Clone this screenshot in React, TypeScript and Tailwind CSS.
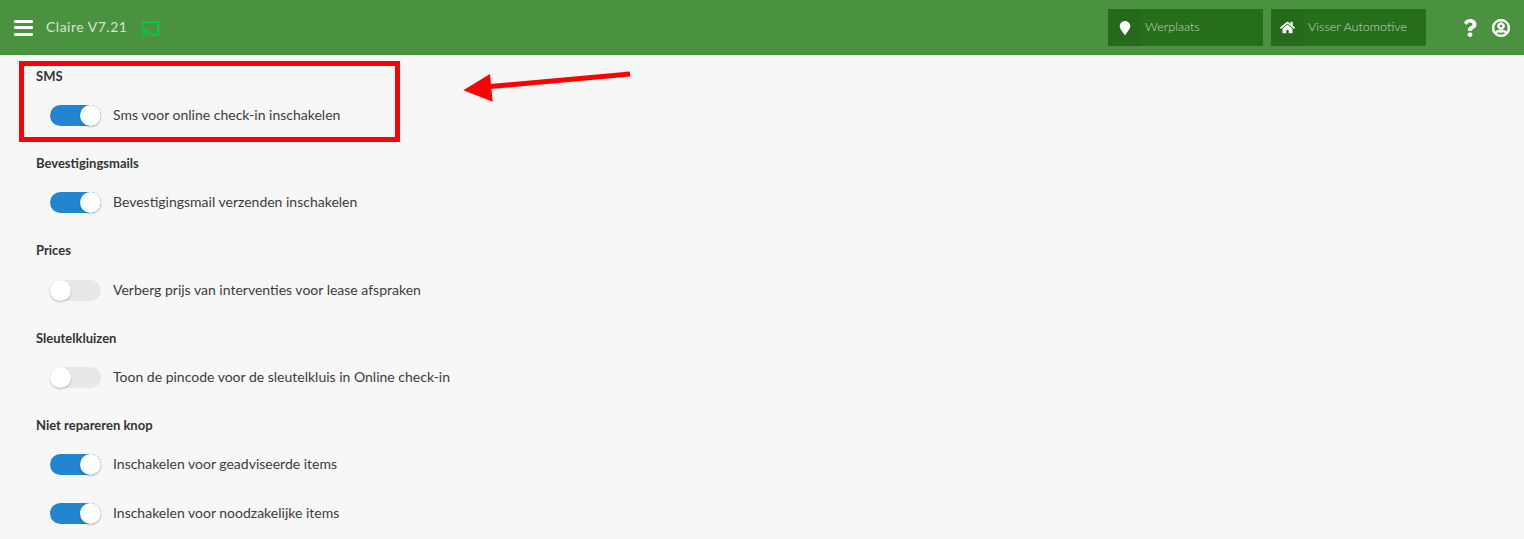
import { FaMapMarker, FaHome, FaQuestion, FaRegUserCircle } from 'react-icons/fa'
import { MdCast } from 'react-icons/md'

const Toggle = ({ on }: { on: boolean }) => {
  return (
    <div
      className={
        on
          ? 'relative w-[51px] h-[21px] rounded-full bg-[#2185d0] shrink-0'
          : 'relative w-[51px] h-[21px] rounded-full bg-[#e8e8e8] shrink-0'
      }
    >
      <div
        className={
          on
            ? 'absolute right-0 top-0 w-[21px] h-[21px] rounded-full bg-white shadow-[0_1px_2px_rgba(34,36,38,0.3)]'
            : 'absolute left-0 top-0 w-[21px] h-[21px] rounded-full bg-white shadow-[0_1px_2px_rgba(34,36,38,0.3)]'
        }
      />
    </div>
  )
}

const Row = ({ on, label, className }: { on: boolean; label: string; className: string }) => {
  return (
    <div className={`flex items-center gap-3 pl-[14px] h-[21px] ${className}`}>
      <Toggle on={on} />
      <span className="pb-[2px] text-[14px] text-[#3c3c3c]">{label}</span>
    </div>
  )
}

const Title = ({ children }: { children: string }) => {
  return <div className="text-[13px] leading-[16px] font-bold text-[#333]">{children}</div>
}

const LocationBox = ({ icon, label }: { icon: React.ReactNode; label: string }) => {
  return (
    <div className="flex w-[155px] h-[37px] bg-[#276e1c] items-center text-[12.6px] font-light text-[#c4dabf]">
      <div className="w-[33px] h-full flex items-center justify-center bg-[#256a1b]">{icon}</div>
      <div className="pl-[4px]">{label}</div>
    </div>
  )
}

export default function App() {
  return (
    <div className="relative h-[539px] overflow-hidden bg-[#f7f7f7] font-['Lato','Open_Sans',sans-serif]">
      {/* top bar */}
      <div className="flex items-center justify-between h-[55px] bg-[#4a923f]">
        <div className="flex items-center pl-[14px]">
          <div className="flex flex-col gap-[3.5px] w-[19px]">
            <div className="h-[3px] bg-white rounded-[1px]" />
            <div className="h-[3px] bg-white rounded-[1px]" />
            <div className="h-[3px] bg-white rounded-[1px]" />
          </div>
          <div className="ml-[13px] pb-[3px] text-[14px] tracking-[0.5px] text-[#d5e6d1]">Claire V7.21</div>
          <MdCast size={19} className="ml-[14px] mt-[1px] text-[#00d050]" />
        </div>
        <div className="flex items-center">
          <div className="flex gap-2">
            <LocationBox icon={<FaMapMarker size={14} className="text-white" />} label="Werplaats" />
            <LocationBox icon={<FaHome size={15} className="text-white" />} label="Visser Automotive" />
          </div>
          <div className="ml-[35px] mr-[14px] flex items-center gap-[13px] text-white">
            <FaQuestion size={18} />
            <FaRegUserCircle size={18} stroke="currentColor" strokeWidth={24} />
          </div>
        </div>
      </div>

      {/* settings */}
      <div className="pl-[36px] pt-[13px]">
        <Title>SMS</Title>
        <Row on={true} label="Sms voor online check-in inschakelen" className="mt-[21px]" />

        <div className="mt-[29px]"><Title>Bevestigingsmails</Title></div>
        <Row on={true} label="Bevestigingsmail verzenden inschakelen" className="mt-[21px]" />

        <div className="mt-[29px]"><Title>Prices</Title></div>
        <Row on={false} label="Verberg prijs van interventies voor lease afspraken" className="mt-[22px]" />

        <div className="mt-[29px]"><Title>Sleutelkluizen</Title></div>
        <Row on={false} label="Toon de pincode voor de sleutelkluis in Online check-in" className="mt-[21px]" />

        <div className="mt-[29px]"><Title>Niet repareren knop</Title></div>
        <Row on={true} label="Inschakelen voor geadviseerde items" className="mt-[21px]" />
        <Row on={true} label="Inschakelen voor noodzakelijke items" className="mt-[28px]" />
      </div>

      {/* annotation */}
      <div className="absolute left-[19px] top-[61px] w-[381px] h-[81px] border-[5px] border-[#ff0000]" />
      <svg className="absolute left-[450px] top-[60px]" width="200" height="50" viewBox="0 0 200 50">
        <path d="M180 14 L40 26.5" stroke="#ff0000" strokeWidth="5" fill="none" />
        <path d="M13.3 30.3 L40 14 L42.7 41.7 Z" fill="#ff0000" />
      </svg>
    </div>
  )
}
